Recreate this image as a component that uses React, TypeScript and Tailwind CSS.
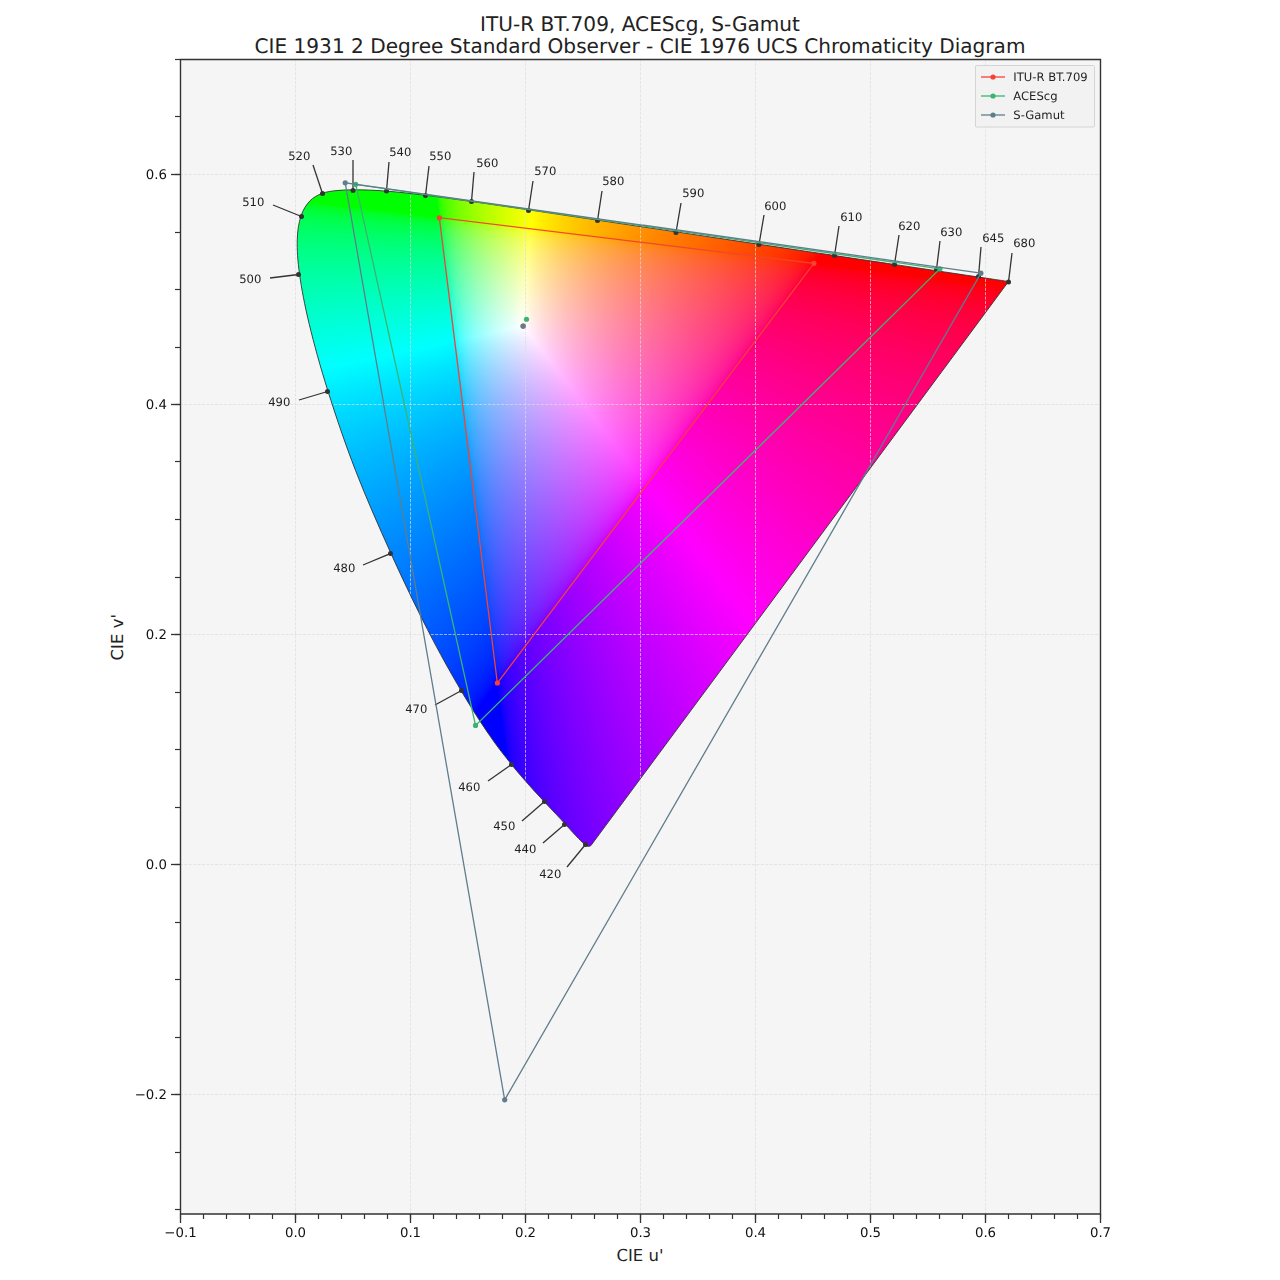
import { useEffect, useRef } from 'react';

// CIE 1931 2 degree spectral locus (xy), 380nm to 700nm in 5nm steps
const LOCUS: [number, number][] = [
  [0.1741, 0.005], [0.174, 0.005], [0.1738, 0.0049], [0.1736, 0.0049], [0.1733, 0.0048], [0.173, 0.0048],
  [0.1726, 0.0048], [0.1721, 0.0048], [0.1714, 0.0051], [0.1703, 0.0058], [0.1689, 0.0069], [0.1669, 0.0086],
  [0.1644, 0.0109], [0.1611, 0.0138], [0.1566, 0.0177], [0.151, 0.0227], [0.144, 0.0297], [0.1355, 0.0399],
  [0.1241, 0.0578], [0.1096, 0.0868], [0.0913, 0.1327], [0.0687, 0.2007], [0.0454, 0.295], [0.0235, 0.4127],
  [0.0082, 0.5384], [0.0039, 0.6548], [0.0139, 0.7502], [0.0389, 0.812], [0.0743, 0.8338], [0.1142, 0.8262],
  [0.1547, 0.8059], [0.1929, 0.7816], [0.2296, 0.7543], [0.2658, 0.7243], [0.3016, 0.6923], [0.3373, 0.6589],
  [0.3731, 0.6245], [0.4087, 0.5896], [0.4441, 0.5547], [0.4788, 0.5202], [0.5125, 0.4866], [0.5448, 0.4544],
  [0.5752, 0.4242], [0.6029, 0.3965], [0.627, 0.3725], [0.6482, 0.3514], [0.6658, 0.334], [0.6801, 0.3197],
  [0.6915, 0.3083], [0.7006, 0.2993], [0.7079, 0.292], [0.714, 0.2859], [0.719, 0.2809], [0.723, 0.277],
  [0.726, 0.274], [0.7283, 0.2717], [0.73, 0.27], [0.7311, 0.2689], [0.732, 0.268], [0.7327, 0.2673],
  [0.7334, 0.2666],
];

const toPx = ([x, y]: [number, number]): [number, number] => {
  const d = -2 * x + 12 * y + 3;
  return [295.6 + 1150 * ((4 * x) / d), 864.6 - 1150 * ((9 * y) / d)];
};

const locusPx = LOCUS.map(toPx);

// smooth closed-ish curve through the locus samples
const locusPath = (() => {
  const p = locusPx;
  let d = `M${p[0][0]} ${p[0][1]}`;
  for (let i = 0; i < p.length - 1; i++) {
    const a = p[Math.max(i - 1, 0)];
    const b = p[i];
    const c = p[i + 1];
    const e = p[Math.min(i + 2, p.length - 1)];
    d += `C${b[0] + (c[0] - a[0]) / 6} ${b[1] + (c[1] - a[1]) / 6} ${c[0] - (e[0] - b[0]) / 6} ${c[1] - (e[1] - b[1]) / 6} ${c[0]} ${c[1]}`;
  }
  return d + 'Z';
})();

const spaces = [
  {
    name: 'ITU-R BT.709',
    color: '#F44336',
    tri: [[0.64, 0.33], [0.3, 0.6], [0.15, 0.06]] as [number, number][],
    white: [0.3127, 0.329] as [number, number],
  },
  {
    name: 'ACEScg',
    color: '#3CB371',
    tri: [[0.713, 0.293], [0.165, 0.83], [0.128, 0.044]] as [number, number][],
    white: [0.32168, 0.33767] as [number, number],
  },
  {
    name: 'S-Gamut',
    color: '#607D8B',
    tri: [[0.73, 0.28], [0.14, 0.855], [0.1, -0.05]] as [number, number][],
    white: [0.3127, 0.329] as [number, number],
  },
];

// dot, end of leader line, label centre
const labels: [string, number, number, number, number, number, number][] = [
  ['520', 322.5, 193.5, 313, 165, 299.3, 155.6],
  ['530', 353, 190.5, 353, 160, 341.3, 150.6],
  ['540', 386.5, 191, 389, 162, 400.3, 151.6],
  ['550', 425.5, 195.5, 429, 166, 440.3, 155.6],
  ['560', 471.5, 201.5, 474, 172, 487.3, 162.6],
  ['570', 528.5, 210.5, 533, 181, 545.3, 170.6],
  ['580', 597.5, 220.5, 602, 191, 613.3, 180.6],
  ['590', 676, 232.5, 681, 203, 693.3, 192.6],
  ['600', 759, 244.5, 764, 215, 775.3, 205.6],
  ['610', 834.5, 255.5, 839, 226, 851.3, 216.6],
  ['620', 894.5, 264.5, 899, 235, 909.3, 225.6],
  ['630', 936.5, 269.5, 940, 241, 951.3, 231.6],
  ['645', 978.5, 276.5, 981, 247, 993.3, 237.6],
  ['680', 1008.5, 282, 1012, 253, 1024.3, 242.6],
  ['510', 301.5, 216.5, 273, 205, 253.3, 201.6],
  ['500', 298.5, 274.5, 270, 278, 250.3, 278.6],
  ['490', 327.5, 391.5, 299, 400, 279.3, 401.6],
  ['480', 390.5, 553.5, 363, 565, 344.3, 567.6],
  ['470', 461.5, 690.5, 435, 705, 416.3, 708.6],
  ['460', 511.5, 764.5, 488, 781, 469.3, 786.6],
  ['450', 544.5, 801.5, 522, 821, 504.3, 825.6],
  ['440', 564.5, 824.5, 543, 843, 525.3, 848.6],
  ['420', 585.5, 844.5, 567, 867, 550.3, 873.6],
];

const xMajor = [-0.1, 0, 0.1, 0.2, 0.3, 0.4, 0.5, 0.6, 0.7];
const yMajor = [0.6, 0.4, 0.2, 0, -0.2];
const xMinor = Array.from({ length: 41 }, (_, i) => -0.1 + i * 0.02);
const yMinor = Array.from({ length: 21 }, (_, i) => -0.3 + i * 0.05);
const xPx = (u: number) => Math.round(295 + 1150 * u) + 0.5;
const yPx = (v: number) => Math.round(864 - 1150 * v) + 0.5;
const fmt = (n: number) => (n < 0 ? '\u2212' : '') + Math.abs(n).toFixed(1);

const encode = (c: number) => {
  const v = Math.min(Math.max(c, 0), 1);
  return 255 * (v <= 0.0031308 ? 12.92 * v : 1.055 * Math.pow(v, 1 / 2.4) - 0.055);
};

function drawDiagram(canvas: HTMLCanvasElement) {
  const w = 920;
  const h = 1155;
  const ctx = canvas.getContext('2d');
  if (!ctx) return;
  const buffer = document.createElement('canvas');
  buffer.width = w;
  buffer.height = h;
  const bctx = buffer.getContext('2d')!;
  const img = bctx.createImageData(w, h);
  for (let j = 0; j < h; j++) {
    for (let i = 0; i < w; i++) {
      const u = (i + 180.5 - 295.6) / 1150;
      const v = (864.6 - (j + 59.5)) / 1150;
      const d = 6 * u - 16 * v + 12;
      const x = (9 * u) / d;
      const y = (4 * v) / d;
      const X = x / y;
      const Z = (1 - x - y) / y;
      const r = 3.2406 * X - 1.5372 - 0.4986 * Z;
      const g = -0.9689 * X + 1.8758 + 0.0415 * Z;
      const b = 0.0557 * X - 0.204 + 1.057 * Z;
      const m = Math.max(r, g, b);
      const k = (i + j * w) * 4;
      img.data[k] = encode(r / m);
      img.data[k + 1] = encode(g / m);
      img.data[k + 2] = encode(b / m);
      img.data[k + 3] = 255;
    }
  }
  bctx.putImageData(img, 0, 0);
  ctx.save();
  ctx.translate(-180, -59);
  ctx.clip(new Path2D(locusPath));
  ctx.drawImage(buffer, 180, 59);
  ctx.restore();
}

const App = () => {
  const canvasRef = useRef<HTMLCanvasElement>(null);

  useEffect(() => {
    if (canvasRef.current) drawDiagram(canvasRef.current);
  }, []);

  return (
    <div className="grid h-[1280px] w-[1280px] grid-cols-[180px_920px_180px] grid-rows-[59px_1155px_66px] bg-white font-['DejaVu_Sans',sans-serif] text-[#222] [text-rendering:geometricPrecision]">
      <div className="col-start-2 pt-[13px] text-center text-[20.1px] leading-[22px] whitespace-nowrap">
        <div>ITU-R BT.709, ACEScg, S-Gamut</div>
        <div>CIE 1931 2 Degree Standard Observer - CIE 1976 UCS Chromaticity Diagram</div>
      </div>

      <div className="col-start-1 row-start-2 flex items-center justify-end pr-[39px]">
        <span className="translate-y-px -rotate-90 text-[16.5px] leading-none whitespace-nowrap">CIE v'</span>
      </div>

      <div className="relative col-start-2 row-start-2 bg-[#f5f5f5]">
        <canvas ref={canvasRef} width={920} height={1155} className="absolute inset-0" />
        <svg viewBox="180 59 920 1155" className="absolute inset-0 h-[1155px] w-[920px] overflow-visible">
          {xMajor.slice(1, -1).map((u) => (
            <line key={u} x1={xPx(u)} x2={xPx(u)} y1={59} y2={1214} stroke="#dcdcdc" strokeWidth={0.7} strokeDasharray="3 1.4" />
          ))}
          {yMajor.map((v) => (
            <line key={v} x1={180} x2={1100} y1={yPx(v)} y2={yPx(v)} stroke="#dcdcdc" strokeWidth={0.7} strokeDasharray="3 1.4" />
          ))}

          <path d={locusPath} fill="none" stroke="#333" strokeWidth={0.9} />

          {labels.map(([t, x, y, x2, y2, tx, ty]) => (
            <g key={t}>
              <line x1={x} y1={y} x2={x2} y2={y2} stroke="#333" strokeWidth={1.3} />
              <circle cx={x} cy={y} r={2.5} fill="#333" />
              <text x={tx} y={ty} textAnchor="middle" dominantBaseline="central" className="fill-[#222] text-[11.6px]">
                {t}
              </text>
            </g>
          ))}

          {spaces.map((s) => {
            const pts = s.tri.map(toPx);
            const [wx, wy] = toPx(s.white);
            return (
              <g key={s.name} fill={s.color}>
                <polygon points={pts.map((p) => p.join(',')).join(' ')} fill="none" stroke={s.color} strokeWidth={1.3} />
                {pts.map((p) => (
                  <circle key={p[0]} cx={p[0]} cy={p[1]} r={2.6} />
                ))}
                <circle cx={wx} cy={wy} r={2.6} />
              </g>
            );
          })}

          {/* legend */}
          <rect x={975.5} y={65.5} width={119} height={61.5} rx={1} fill="#f2f2f2" stroke="#d4d4d4" />
          {spaces.map((s, i) => {
            const y = 77 + i * 19;
            return (
              <g key={s.name}>
                <line x1={981} x2={1005} y1={y} y2={y} stroke={s.color} strokeWidth={1.3} />
                <circle cx={993} cy={y} r={2.6} fill={s.color} />
                <text x={1013.3} y={y} dominantBaseline="central" className="fill-[#222] text-[11.6px]">
                  {s.name}
                </text>
              </g>
            );
          })}

          {/* spines and ticks */}
          <path d="M180.5 1214V59.5H1100.5V1214H180.5" fill="none" stroke="#333" strokeWidth={1.4} />
          {yMinor.map((v) => (
            <line key={v} x1={175} x2={180} y1={yPx(v)} y2={yPx(v)} stroke="#333" strokeWidth={1.2} />
          ))}
          {xMinor.map((u) => (
            <line key={u} x1={xPx(u)} x2={xPx(u)} y1={1214} y2={1219} stroke="#333" strokeWidth={1.2} />
          ))}
          {yMajor.map((v) => (
            <g key={v}>
              <line x1={171} x2={180} y1={yPx(v)} y2={yPx(v)} stroke="#333" strokeWidth={1.3} />
              <text x={167} y={yPx(v) + 0.5} textAnchor="end" dominantBaseline="central" className="fill-[#111] text-[13.3px]">
                {fmt(v)}
              </text>
            </g>
          ))}
          {xMajor.map((u) => (
            <g key={u}>
              <line x1={xPx(u)} x2={xPx(u)} y1={1214} y2={1223} stroke="#333" strokeWidth={1.3} />
              <text x={xPx(u)} y={1233} textAnchor="middle" dominantBaseline="central" className="fill-[#111] text-[13.3px]">
                {fmt(u)}
              </text>
            </g>
          ))}
        </svg>
      </div>

      <div className="col-start-2 row-start-3 pt-[32px] text-center text-[16.5px] leading-[20px]">CIE u'</div>
    </div>
  );
};

export default App;
